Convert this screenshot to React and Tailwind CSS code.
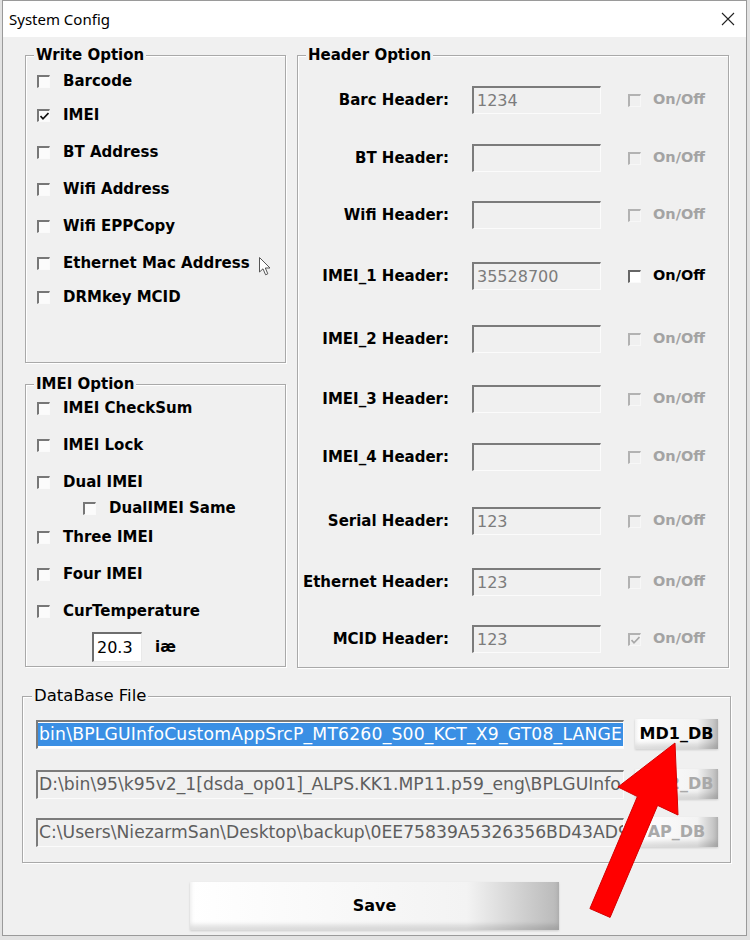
import React from 'react';

const writeOptions = [
  { label: 'Barcode', mt: 'mt-[7px]' },
  { label: 'IMEI', mt: 'mt-[14px]', checked: true },
  { label: 'BT Address', mt: 'mt-[17px]' },
  { label: 'Wifi Address', mt: 'mt-[17px]' },
  { label: 'Wifi EPPCopy', mt: 'mt-[17px]' },
  { label: 'Ethernet Mac Address', mt: 'mt-[17px]' },
  { label: 'DRMkey MCID', mt: 'mt-[14px]' },
];

const imeiOptions = [
  { label: 'IMEI CheckSum', mt: 'mt-[5px]', ml: 'ml-[11px]' },
  { label: 'IMEI Lock', mt: 'mt-[17px]', ml: 'ml-[11px]' },
  { label: 'Dual IMEI', mt: 'mt-[17px]', ml: 'ml-[11px]' },
  { label: 'DualIMEI Same', mt: 'mt-[6px]', ml: 'ml-[57px]' },
  { label: 'Three IMEI', mt: 'mt-[9px]', ml: 'ml-[11px]' },
  { label: 'Four IMEI', mt: 'mt-[17px]', ml: 'ml-[11px]' },
  { label: 'CurTemperature', mt: 'mt-[17px]', ml: 'ml-[11px]' },
];

const headers = [
  { label: 'Barc Header:', value: '1234', mt: 'mt-[22px]' },
  { label: 'BT Header:', value: '', mt: 'mt-[30px]' },
  { label: 'Wifi Header:', value: '', mt: 'mt-[29px]' },
  { label: 'IMEI_1 Header:', value: '35528700', mt: 'mt-[33px]', enabled: true },
  { label: 'IMEI_2 Header:', value: '', mt: 'mt-[35px]' },
  { label: 'IMEI_3 Header:', value: '', mt: 'mt-[32px]' },
  { label: 'IMEI_4 Header:', value: '', mt: 'mt-[30px]' },
  { label: 'Serial Header:', value: '123', mt: 'mt-[36px]' },
  { label: 'Ethernet Header:', value: '123', mt: 'mt-[33px]' },
  { label: 'MCID Header:', value: '123', mt: 'mt-[29px]', checked: true },
];

const dbRows = [
  { path: 'bin\\BPLGUInfoCustomAppSrcP_MT6260_S00_KCT_X9_GT08_LANGE', button: 'MD1_DB', mt: 'mt-[14px]', active: true },
  { path: 'D:\\bin\\95\\k95v2_1[dsda_op01]_ALPS.KK1.MP11.p59_eng\\BPLGUInfo', button: 'MD2_DB', mt: 'mt-[20px]' },
  { path: 'C:\\Users\\NiezarmSan\\Desktop\\backup\\0EE75839A5326356BD43AD9', button: 'AP_DB', mt: 'mt-[18px]' },
];

function CheckBox({ checked, variant = 'normal' }) {
  const look = {
    normal: 'border-t-[#777] border-l-[#777] border-r-[#fafafa] border-b-[#fafafa] bg-[#fbfbfb]',
    enabled: 'border-t-[#666] border-l-[#666] border-r-[#fafafa] border-b-[#fafafa] bg-white',
    disabled: 'border-t-[#b2b2b2] border-l-[#b2b2b2] border-r-[#f7f7f7] border-b-[#f7f7f7] bg-[#f0f0f0]',
  }[variant];
  return (
    <div className={`relative w-[13px] h-[13px] shrink-0 border-t-2 border-l-2 border-r border-b ${look}`}>
      {checked && (
        <svg className="absolute left-[1px] top-[1px]" width="9" height="9" viewBox="0 0 9 9">
          <polyline
            points="0.5,4 3,6.8 8.5,1"
            fill="none"
            stroke={variant === 'disabled' ? '#a8a8a8' : '#111'}
            strokeWidth="1.7"
          />
        </svg>
      )}
    </div>
  );
}

function Group({ title, bold = true, className, legendClass = 'ml-[8px]', children }) {
  return (
    <fieldset className={`border border-[#a9a9a9] shadow-[inset_1px_1px_0_#fff,1px_1px_0_#fff] ${className}`}>
      <legend className={`${legendClass} px-[2px] bg-[#f0f0f0] leading-[18px] text-black ${bold ? 'font-bold text-[15px]' : 'text-[16.5px]'}`}>
        {title}
      </legend>
      {children}
    </fieldset>
  );
}

function OptionRow({ label, checked, mt, ml = 'ml-[11px]' }) {
  return (
    <div className={`flex items-center h-[20px] ${mt} ${ml}`}>
      <CheckBox checked={checked} />
      <span className="ml-[13px] text-[15px] font-bold leading-[20px] text-black whitespace-nowrap">{label}</span>
    </div>
  );
}

function Sunken({ className, children }) {
  return (
    <div className={`border-t-2 border-l-2 border-r border-b border-t-[#7b7b7b] border-l-[#7b7b7b] border-r-[#fbfbfb] border-b-[#fbfbfb] overflow-hidden ${className}`}>
      {children}
    </div>
  );
}

function ShadedButton({ className, children }) {
  return (
    <div className={`flex items-center justify-center font-bold bg-linear-to-r from-white via-[#f3f3f3] via-75% to-[#b9b9b9] shadow-[inset_0_-5px_5px_rgba(0,0,0,0.13),0_1px_2px_rgba(0,0,0,0.15)] ${className}`}>
      {children}
    </div>
  );
}

export default function App() {
  return (
    <div className="relative w-[750px] h-[940px] bg-[#e2e2e2] overflow-hidden font-['DejaVu_Sans',sans-serif]">
      <div className="ml-[2px] w-[745px] h-[936px] border border-[#9a9a9a] bg-[#f0f0f0]">
        {/* title bar */}
        <div className="h-[36px] bg-white flex items-center justify-between pl-[6px] pr-[11px]">
          <span className="font-['Noto_Sans',sans-serif] text-[15px] text-black">System Config</span>
          <svg width="14" height="14" viewBox="0 0 14 14">
            <path d="M1 1 L13 13 M13 1 L1 13" stroke="#222" strokeWidth="1.1" />
          </svg>
        </div>

        <div className="pt-[9px]">
          <div className="flex items-start pl-[22px] gap-[11px]">
            {/* left column */}
            <div className="flex flex-col w-[261px]">
              <Group title="Write Option" className="h-[317px]">
                {writeOptions.map((o) => (
                  <OptionRow key={o.label} {...o} />
                ))}
              </Group>
              <Group title="IMEI Option" className="h-[292px] mt-[12px]">
                {imeiOptions.map((o) => (
                  <OptionRow key={o.label} {...o} />
                ))}
                <div className="flex items-center mt-[11px] ml-[66px]">
                  <div className="w-[50px] h-[30px] bg-white border-t-2 border-l-2 border-r border-b border-t-[#6e6e6e] border-l-[#6e6e6e] border-r-[#e9e9e9] border-b-[#e9e9e9] flex items-center pl-[3px] text-[16px] text-black">
                    20.3
                  </div>
                  <span className="ml-[13px] text-[15px] font-bold text-black">iæ</span>
                </div>
              </Group>
            </div>

            {/* header option */}
            <Group title="Header Option" className="w-[432px] h-[622px]">
              {headers.map((h) => (
                <div key={h.label} className={`flex items-center h-[28px] ${h.mt}`}>
                  <div className="w-[151px] text-right text-[15px] font-bold text-black whitespace-nowrap">{h.label}</div>
                  <Sunken className="ml-[23px] w-[129px] h-[28px] bg-[#f0f0f0] flex items-center pl-[3px] text-[16px] text-[#7c7c7c]">
                    {h.value}
                  </Sunken>
                  <div className="ml-[27px]">
                    <CheckBox checked={h.checked} variant={h.enabled ? 'enabled' : 'disabled'} />
                  </div>
                  <span className={`ml-[12px] text-[14.5px] font-bold ${h.enabled ? 'text-black' : 'text-[#a3a3a3]'}`}>On/Off</span>
                </div>
              ))}
            </Group>
          </div>

          {/* database */}
          <Group title="DataBase File" bold={false} legendClass="ml-[9px]" className="ml-[19px] mt-[19px] w-[709px] h-[176px]">
            {dbRows.map((r) => (
              <div key={r.button} className={`flex items-center h-[30px] ml-[13px] ${r.mt}`}>
                <Sunken className={`w-[588px] h-[29px] flex items-center whitespace-nowrap text-[17.2px] ${r.active ? 'bg-white' : 'bg-[#f0f0f0]'}`}>
                  {r.active ? (
                    <span className="flex items-center h-[23px] w-full bg-[#3a8fe4] text-white pl-[1px] overflow-hidden tracking-[0.2px]">
                      {r.path}
                      <span className="ml-[1px] shrink-0 w-[1px] h-[21px] bg-black" />
                    </span>
                  ) : (
                    <span className="pl-[1px] text-[#5e5e5e]">{r.path}</span>
                  )}
                </Sunken>
                <ShadedButton className={`ml-[11px] w-[83px] h-[30px] text-[16px] ${r.active ? 'text-black' : 'text-[#a9a9a9]'}`}>
                  {r.button}
                </ShadedButton>
              </div>
            ))}
          </Group>

          <ShadedButton className="mx-auto mt-[19px] w-[369px] h-[48px] text-[16px] text-black">Save</ShadedButton>
        </div>
      </div>

      {/* mouse cursor */}
      <svg className="absolute left-[259px] top-[257px]" width="13" height="20" viewBox="0 0 13 20">
        <path d="M0.5 0.5 L0.5 15 L4 11.8 L6.6 17.8 L8.8 16.8 L6.3 11 L11 11 Z" fill="#fff" stroke="#555" strokeWidth="1" />
      </svg>

      {/* red arrow */}
      <svg className="absolute left-0 top-0 pointer-events-none" width="750" height="940" viewBox="0 0 750 940">
        <polygon
          points="675,743 678,815 657.6,805.4 610.1,917.4 589.9,908.6 637.4,796.6 618,787"
          fill="#ff0000"
          stroke="#d40000"
          strokeWidth="1"
        />
      </svg>
    </div>
  );
}
